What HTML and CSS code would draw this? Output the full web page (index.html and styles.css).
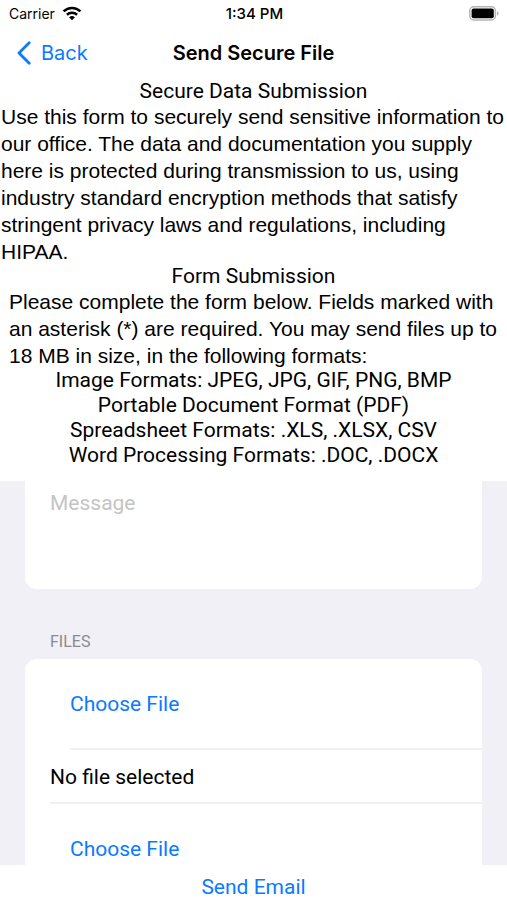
FILE: index.html
```html
<!DOCTYPE html>
<html lang="en">
<head>
    <meta charset="UTF-8">
    <meta name="viewport" content="width=device-width, initial-scale=1">
    <title>Send Secure File</title>
    <link rel="stylesheet" href="styles.css">
</head>
<body>
    <div class="status-bar">
        <div class="carrier">
            <span>Carrier</span>
            <svg class="wifi" width="20" height="15" viewBox="0 0 20 15">
                <g fill="none" stroke="#000" stroke-width="2.6">
                    <path d="M1.6 5.4a12 12 0 0 1 16.8 0"/>
                    <path d="M4.9 8.8a7.4 7.4 0 0 1 10.2 0"/>
                </g>
                <path d="M10 14.2l-2.9-2.9a4.2 4.2 0 0 1 5.8 0z"/>
            </svg>
        </div>
        <div class="clock">1:34 PM</div>
        <div class="battery">
            <svg width="31" height="15" viewBox="0 0 31 15">
                <rect x="0.8" y="0.8" width="25.6" height="13.2" rx="4" fill="#fff" stroke="#b4b4b4" stroke-width="1.5"/>
                <rect x="2.6" y="2.6" width="22.2" height="9.6" rx="2"/>
                <path d="M28 5.2c2.2.8 2.2 3.6 0 4.4z" fill="#b4b4b4"/>
            </svg>
        </div>
    </div>

    <header class="nav">
        <button class="back" type="button">
            <svg width="14" height="24" viewBox="0 0 14 24">
                <path d="M12.2 1.8L2 12l10.2 10.2" fill="none" stroke="#0a7aff" stroke-width="2.8" stroke-linecap="round" stroke-linejoin="round"/>
            </svg>
            Back
        </button>
        <h1>Send Secure File</h1>
    </header>

    <section class="intro">
        <h2>Secure Data Submission</h2>
        <p>Use this form to securely send sensitive information to our office. The data and documentation you supply here is protected during transmission to us, using industry standard encryption methods that satisfy stringent privacy laws and regulations, including HIPAA.</p>
        <h2>Form Submission</h2>
        <p class="inset">Please complete the form below. Fields marked with an asterisk (*) are required. You may send files up to 18 MB in size, in the following formats:</p>
        <ul class="formats">
            <li>Image Formats: JPEG, JPG, GIF, PNG, BMP</li>
            <li>Portable Document Format (PDF)</li>
            <li>Spreadsheet Formats: .XLS, .XLSX, CSV</li>
            <li>Word Processing Formats: .DOC, .DOCX</li>
        </ul>
    </section>

    <main class="form">
        <div class="card message-card">
            <textarea class="message" placeholder="Message" aria-label="Message"></textarea>
        </div>
        <h3>FILES</h3>
        <div class="card files-card">
            <div class="row choose"><button type="button">Choose File</button></div>
            <div class="row selected">No file selected</div>
            <div class="row choose"><button type="button">Choose File</button></div>
        </div>
    </main>

    <footer class="footer">
        <button type="submit">Send Email</button>
    </footer>
</body>
</html>
```
FILE: styles.css
```css
* {
    box-sizing: border-box;
}
body {
    margin: 0;
    height: 100vh;
    display: flex;
    flex-direction: column;
    overflow: hidden;
    background: #fff;
    color: #000;
    font-family: Roboto, "Liberation Sans", sans-serif;
    font-size: 21px;
    line-height: 25px;
}
h1, h2, h3, p, ul {
    margin: 0;
    padding: 0;
    font-size: 21px;
    font-weight: 400;
}
button {
    padding: 0;
    border: none;
    background: none;
    color: #0a7aff;
    font: inherit;
    cursor: pointer;
}
svg {
    display: block;
}

/* status bar */
.status-bar {
    display: grid;
    grid-template-columns: 1fr auto 1fr;
    align-items: center;
    height: 27px;
    padding: 0 7px 0 9px;
    font-family: Inter, "Liberation Sans", sans-serif;
    font-size: 14px;
    line-height: 20px;
}
.carrier {
    display: flex;
    align-items: center;
    gap: 7px;
}
.clock {
    font-size: 15px;
    font-weight: 500;
}
.battery {
    justify-self: end;
}

/* navigation */
.nav {
    display: grid;
    grid-template-columns: 1fr auto 1fr;
    align-items: center;
    height: 52px;
    padding: 0 17px;
    font-family: Inter, "Liberation Sans", sans-serif;
    font-size: 20px;
}
.nav h1 {
    font-size: 20px;
    font-weight: 600;
}
.back {
    display: flex;
    align-items: center;
    gap: 10px;
}

.intro {
    padding-bottom: 13px;
    text-align: center;
}
.intro p {
    margin: -1px 0;
    padding: 0 1px;
    font-family: "Liberation Sans", Arial, sans-serif;
    line-height: 27px;
    text-align: left;
}
.intro .inset {
    padding: 0 9px;
}
.formats {
    list-style: none;
}

/* grouped list */
.form {
    flex: 1;
    min-height: 0;
    padding: 0 25px;
    overflow: hidden;
    background: #f1f0f6;
}
.card {
    background: #fff;
    border-radius: 12px;
    overflow: hidden;
}
.message-card {
    border-radius: 0 0 12px 12px;
}
.message {
    display: block;
    width: 100%;
    height: 108px;
    padding: 10px 25px;
    border: none;
    outline: none;
    resize: none;
    background: none;
    font: inherit;
}
.message::placeholder {
    color: #c4c4c6;
}
.form h3 {
    padding: 43px 25px 7px;
    color: #8a8a8e;
    font-size: 16px;
    line-height: 20px;
}
.row {
    display: flex;
    align-items: center;
    height: 54px;
    padding-top: 2px;
    margin-left: 25px;
    border-bottom: 2px solid #f0f0f2;
}
.choose {
    height: 91px;
    margin-left: 45px;
}

.footer {
    height: 35px;
    padding-top: 10px;
    text-align: center;
}
.footer button {
    display: block;
    margin: 0 auto;
}
```
